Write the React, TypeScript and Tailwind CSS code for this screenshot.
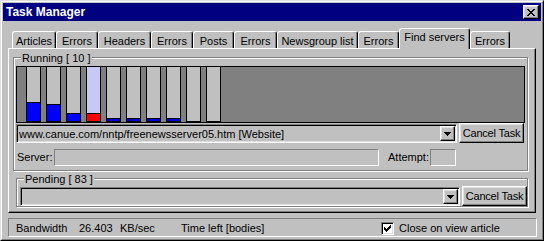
import React from "react";

const raised =
  "border border-t-white border-l-white border-r-black border-b-black shadow-[inset_-1px_-1px_0_#808080,inset_1px_1px_0_#dfdfdf]";
const sunken =
  "border border-t-[#808080] border-l-[#808080] border-r-white border-b-white shadow-[inset_1px_1px_0_#000,inset_-1px_-1px_0_#dfdfdf]";
const sunkenThin =
  "border border-t-[#808080] border-l-[#808080] border-r-white border-b-white";
const etched =
  "border border-[#808080] shadow-[inset_1px_1px_0_#fff,1px_1px_0_#fff]";

function CloseGlyph() {
  return (
    <svg width="8" height="7" viewBox="0 0 8 7" shapeRendering="crispEdges">
      <path
        fill="#000"
        d="M0 0h2v1H0z M6 0h2v1H6z M1 1h2v1H1z M5 1h2v1H5z M2 2h4v1H2z M3 3h2v1H3z M2 4h4v1H2z M1 5h2v1H1z M5 5h2v1H5z M0 6h2v1H0z M6 6h2v1H6z"
      />
    </svg>
  );
}

function Arrow() {
  return (
    <svg width="7" height="4" viewBox="0 0 7 4" shapeRendering="crispEdges">
      <path fill="#000" d="M0 0h7v1H0z M1 1h5v1H1z M2 2h3v1H2z M3 3h1v1H3z" />
    </svg>
  );
}

function Check() {
  return (
    <svg width="7" height="7" viewBox="0 0 7 7" shapeRendering="crispEdges">
      <path
        fill="#000"
        d="M6 0h1v1H6z M5 1h2v1H5z M0 2h1v1H0z M4 2h3v1H4z M0 3h2v1H0z M3 3h3v1H3z M0 4h5v1H0z M1 5h3v1H1z M2 6h1v1H2z"
      />
    </svg>
  );
}

function Combo({ className, text }: { className: string; text?: string }) {
  return (
    <div className={`${sunken} ${className} p-[1px] flex items-stretch bg-[#c0c0c0]`}>
      <div className="flex-1 pl-[1px] pt-[1px] flex items-center overflow-hidden whitespace-nowrap">
        {text}
      </div>
      <div className={`${raised} w-[15px] flex items-center justify-center bg-[#c0c0c0]`}>
        <Arrow />
      </div>
    </div>
  );
}

function CancelButton() {
  return (
    <div
      className={`${raised} w-[65px] h-[20px] bg-[#c0c0c0] flex items-center justify-center whitespace-nowrap tracking-[-0.2px]`}
    >
      Cancel Task
    </div>
  );
}

const tabs: { label: string; w: string; sel?: boolean }[] = [
  { label: "Articles", w: "w-[44px]" },
  { label: "Errors", w: "w-[42px]" },
  { label: "Headers", w: "w-[53px]" },
  { label: "Errors", w: "w-[42px]" },
  { label: "Posts", w: "w-[41px]" },
  { label: "Errors", w: "w-[43px]" },
  { label: "Newsgroup list", w: "w-[81px]" },
  { label: "Errors", w: "w-[41px]" },
  { label: "Find servers", w: "w-[71px]", sel: true },
  { label: "Errors", w: "w-[40px]" },
];

const bars: { fill: number; fillCls: string; bg: string }[] = [
  { fill: 19, fillCls: "bg-[#0000ff]", bg: "bg-[#c0c0c0]" },
  { fill: 17, fillCls: "bg-[#0000ff]", bg: "bg-[#c0c0c0]" },
  { fill: 8, fillCls: "bg-[#0000ff]", bg: "bg-[#c0c0c0]" },
  { fill: 8, fillCls: "bg-[#ff0000]", bg: "bg-[#c8c8f4]" },
  { fill: 3, fillCls: "bg-[#0000c8]", bg: "bg-[#c0c0c0]" },
  { fill: 3, fillCls: "bg-[#0000c8]", bg: "bg-[#c0c0c0]" },
  { fill: 3, fillCls: "bg-[#0000c8]", bg: "bg-[#c0c0c0]" },
  { fill: 3, fillCls: "bg-[#0000c8]", bg: "bg-[#c0c0c0]" },
  { fill: 0, fillCls: "bg-[#0000ff]", bg: "bg-[#c0c0c0]" },
  { fill: 0, fillCls: "bg-[#0000ff]", bg: "bg-[#c0c0c0]" },
];

export default function App() {
  return (
    <div className="w-[544px] h-[241px] font-['Liberation_Sans',Arial,sans-serif] text-[11px] leading-[13px] text-black bg-[#c0c0c0] border border-t-[#dfdfdf] border-l-[#dfdfdf] border-r-black border-b-black overflow-hidden">
      <div className="w-full h-full border border-t-white border-l-white border-r-[#808080] border-b-[#808080] p-[1px] flex flex-col">
        {/* Title bar */}
        <div className="h-[18px] shrink-0 bg-[#000080] flex items-center pl-[3px] pr-[2px]">
          <span className="flex-1 text-white font-bold text-[12px] leading-[14px]">Task Manager</span>
          <div className={`${raised} w-[16px] h-[14px] bg-[#c0c0c0] flex items-center justify-center`}>
            <CloseGlyph />
          </div>
        </div>

        <div className="pl-[5px] flex flex-col">
          {/* Tabs */}
          <div className="mt-[7px] h-[20px] flex items-end pl-[4px]">
            {tabs.map((t, i) => (
              <div
                key={i}
                className={`${t.w} ${
                  t.sel ? "h-[21px] -mb-[1px] relative z-10 pt-[2px]" : "h-[17px] pt-[3px]"
                } border-t border-l border-r border-t-white border-l-white border-r-black shadow-[inset_-1px_0_0_#808080] rounded-t-[3px] bg-[#c0c0c0] text-center whitespace-nowrap`}
              >
                {t.label}
              </div>
            ))}
          </div>

          {/* Tab panel */}
          <div className="w-[528px] h-[165px] border border-t-white border-l-white border-r-black border-b-black shadow-[inset_-1px_-1px_0_#808080] pl-[4px] pt-[8px] flex flex-col">
            {/* Running */}
            <div className={`relative w-[515px] ${etched} pt-[8px] pl-[2px] pr-[2px] pb-[4px] flex flex-col`}>
              <span className="absolute left-[7px] top-[-6px] px-[1px] bg-[#c0c0c0]">Running [ 10 ]</span>
              <div className="w-[509px] h-[57px] border border-black bg-[#808080] flex gap-[5px] pl-[9px]">
                {bars.map((b, i) => (
                  <div key={i} className={`w-[15px] h-full border-x border-b border-black ${b.bg} flex flex-col justify-end`}>
                    {b.fill > 0 && (
                      <div className={`${b.fillCls} border-t border-black`} style={{ height: b.fill }} />
                    )}
                  </div>
                ))}
              </div>
              <div className="h-[20px] flex items-end gap-[2px]">
                <Combo className="w-[441px] h-[19px]" text="www.canue.com/nntp/freenewsserver05.htm [Website]" />
                <CancelButton />
              </div>
              <div className="mt-[6px] h-[17px] flex items-center">
                <span className="w-[38px] pl-[1px]">Server:</span>
                <div className={`w-[325px] h-[17px] ${sunkenThin}`} />
                <span className="ml-[9px] w-[42px] whitespace-nowrap">Attempt:</span>
                <div className={`w-[26px] h-[17px] ${sunkenThin}`} />
              </div>
            </div>

            {/* Pending */}
            <div className={`relative ml-[3px] mt-[7px] w-[512px] ${etched} pt-[7px] pl-[3px] flex flex-col`}>
              <span className="absolute left-[7px] top-[-6px] px-[1px] bg-[#c0c0c0]">Pending [ 83 ]</span>
              <div className="h-[20px] flex items-end gap-[2px]">
                <Combo className="w-[440px] h-[19px]" />
                <CancelButton />
              </div>
            </div>
          </div>

          {/* Status bar */}
          <div className={`mt-[5px] w-[529px] h-[19px] ${sunkenThin} flex items-center pl-[7px] pt-[2px] whitespace-nowrap`}>
            <span className="w-[63px]">Bandwidth</span>
            <span className="w-[41px]">26.403</span>
            <span className="w-[61px]">KB/sec</span>
            <span className="w-[200px]">Time left [bodies]</span>
            <div className={`w-[13px] h-[13px] bg-white ${sunken} flex items-center justify-center`}>
              <Check />
            </div>
            <span className="ml-[5px]">Close on view article</span>
          </div>
        </div>
      </div>
    </div>
  );
}
